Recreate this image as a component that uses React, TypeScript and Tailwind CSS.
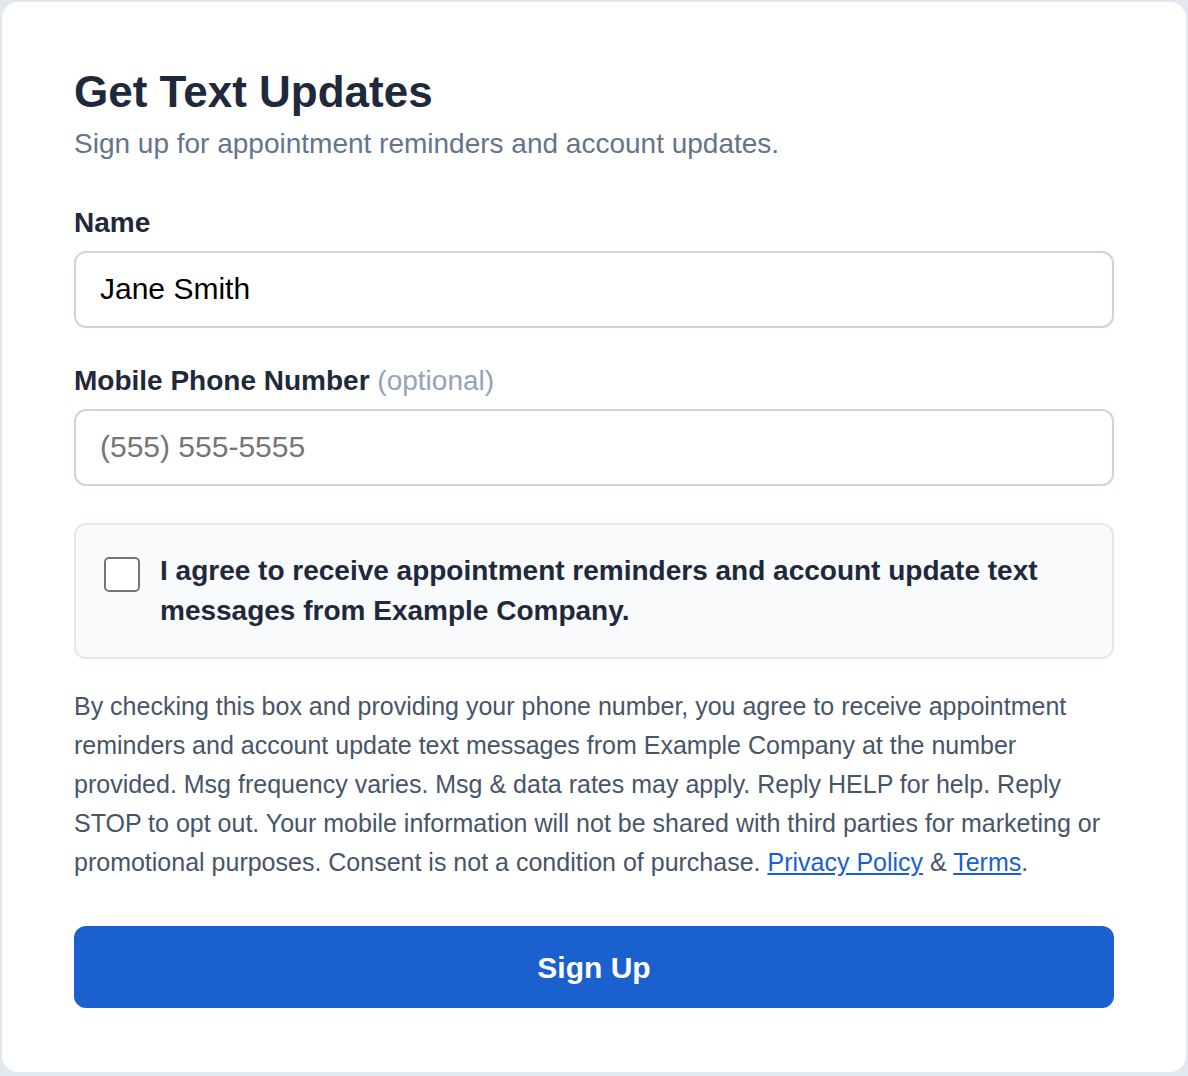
import React from "react";

export default function App() {
  return (
    <div className="min-h-[1076px] w-full bg-[#e2e8f0] p-[2px] pb-[4px]" style={{ fontFamily: '"Liberation Sans", Arial, sans-serif' }}>
      <div className="flex h-[1070px] flex-col rounded-[16px] bg-white px-[72px] pt-[63px]">
        <h1 className="text-[44px] font-bold leading-[53px] text-[#1e293b]">Get Text Updates</h1>
        <p className="mt-[8px] text-[28px] leading-[36px] text-[#64748b]">Sign up for appointment reminders and account updates.</p>

        <label className="mt-[43px] text-[28px] font-bold leading-[36px] text-[#1e293b]">Name</label>
        <div className="mt-[10px] flex h-[77px] items-center rounded-[12px] border-2 border-[#cbd5e1] px-[24px] pb-[2px] text-[30px] text-black">
          Jane Smith
        </div>

        <label className="mt-[35px] text-[28px] leading-[36px] text-[#1e293b]">
          <span className="font-bold">Mobile Phone Number</span>{" "}
          <span className="text-[#94a3b8]">(optional)</span>
        </label>
        <div className="mt-[10px] flex h-[77px] items-center rounded-[12px] border-2 border-[#cbd5e1] px-[24px] pb-[2px] text-[30px] text-[#757575]">
          (555) 555-5555
        </div>

        <div className="mt-[37px] flex gap-[20px] rounded-[12px] border-2 border-[#e2e8f0] bg-[#f8fafc] py-[26px] pl-[28px] pr-[24px]">
          <div className="mt-[6px] h-[35px] w-[36px] shrink-0 rounded-[5px] border-2 border-[#767676] bg-white" />
          <div className="text-[28px] font-bold leading-[40px] text-[#1e293b]">
            I agree to receive appointment reminders and account update text messages from Example Company.
          </div>
        </div>

        <p className="mt-[28px] text-[25px] leading-[39px] text-[#475569]">
          By checking this box and providing your phone number, you agree to receive appointment reminders and account update text messages from Example Company at the number provided. Msg frequency varies. Msg &amp; data rates may apply. Reply HELP for help. Reply STOP to opt out. Your mobile information will not be shared with third parties for marketing or promotional purposes. Consent is not a condition of purchase.{" "}
          <a className="text-[#1a5fd0] underline">Privacy Policy</a> &amp; <a className="text-[#1a5fd0] underline">Terms</a>.
        </p>

        <button className="mt-[44px] h-[82px] w-full rounded-[12px] bg-[#1b60cf] text-[30px] font-bold text-white">
          Sign Up
        </button>
      </div>
    </div>
  );
}
